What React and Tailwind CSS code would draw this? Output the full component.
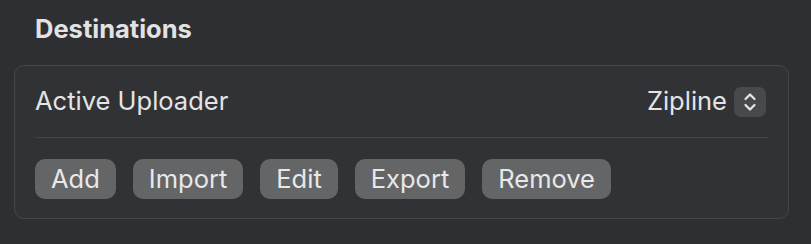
const buttons = ["Add", "Import", "Edit", "Export", "Remove"];

function Stepper() {
  return (
    <div className="w-[32px] h-[30px] mr-[2px] rounded-[7px] bg-[#47494c] flex items-center justify-center">
      <svg width="16" height="22" viewBox="0 0 16 22" fill="none">
        <path d="M3.5 8 L8 3.5 L12.5 8" stroke="#e8e8e8" strokeWidth="2.2" strokeLinecap="round" strokeLinejoin="round" />
        <path d="M3.5 14 L8 18.5 L12.5 14" stroke="#e8e8e8" strokeWidth="2.2" strokeLinecap="round" strokeLinejoin="round" />
      </svg>
    </div>
  );
}

export default function App() {
  return (
    <div
      className="w-[811px] h-[244px] bg-[#2d2f32] text-[#e4e4e4] pt-[13px] pl-[14px] pr-[22px]"
      style={{ fontFamily: "Inter, 'Noto Sans', sans-serif" }}
    >
      <h2 className="pl-[21px] text-[25.5px] font-bold leading-[32px] text-[#e2e2e2]">
        Destinations
      </h2>

      <div className="mt-[20px] h-[154px] rounded-[10px] border border-[#45474a] bg-[#303235] px-[20px]">
        <div className="flex items-center justify-between h-[72px] border-b border-[#424447]">
          <span className="text-[25.5px]">Active Uploader</span>
          <div className="flex items-center gap-[7px]">
            <span className="text-[25.5px]">Zipline</span>
            <Stepper />
          </div>
        </div>

        <div className="flex items-center gap-[17px] pt-[21px]">
          {buttons.map((b) => (
            <button
              key={b}
              className="h-[40px] px-[16px] rounded-[10px] bg-[#646567] text-[25.5px] text-[#e8e8e8] leading-none"
            >
              {b}
            </button>
          ))}
        </div>
      </div>
    </div>
  );
}
